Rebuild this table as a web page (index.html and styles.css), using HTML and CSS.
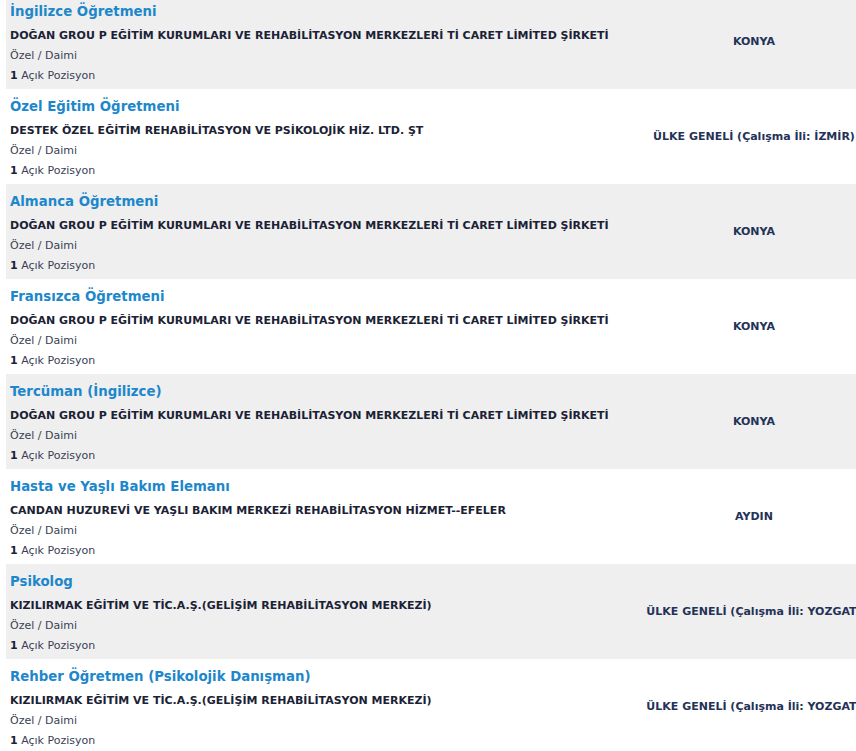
FILE: index.html
```html
<!DOCTYPE html>
<html lang="tr">
<head>
    <meta charset="UTF-8">
    <meta name="viewport" content="width=device-width, initial-scale=1.0">
    <title>İş İlanları</title>
    <link rel="stylesheet" href="styles.css">
</head>
<body>
    <div class="list">
        <div class="job alt">
            <div class="info">
                <a class="title" href="#">İngilizce Öğretmeni</a>
                <div class="company">DOĞAN GROU P EĞİTİM KURUMLARI VE REHABİLİTASYON MERKEZLERİ Tİ CARET LİMİTED ŞİRKETİ</div>
                <div class="meta">Özel / Daimi</div>
                <div class="meta"><b>1</b> Açık Pozisyon</div>
            </div>
            <div class="place"><span>KONYA</span></div>
        </div>

        <div class="job">
            <div class="info">
                <a class="title" href="#">Özel Eğitim Öğretmeni</a>
                <div class="company">DESTEK ÖZEL EĞİTİM REHABİLİTASYON VE PSİKOLOJİK HİZ. LTD. ŞT</div>
                <div class="meta">Özel / Daimi</div>
                <div class="meta"><b>1</b> Açık Pozisyon</div>
            </div>
            <div class="place"><span>ÜLKE GENELİ (Çalışma İli: İZMİR)</span></div>
        </div>

        <div class="job alt">
            <div class="info">
                <a class="title" href="#">Almanca Öğretmeni</a>
                <div class="company">DOĞAN GROU P EĞİTİM KURUMLARI VE REHABİLİTASYON MERKEZLERİ Tİ CARET LİMİTED ŞİRKETİ</div>
                <div class="meta">Özel / Daimi</div>
                <div class="meta"><b>1</b> Açık Pozisyon</div>
            </div>
            <div class="place"><span>KONYA</span></div>
        </div>

        <div class="job">
            <div class="info">
                <a class="title" href="#">Fransızca Öğretmeni</a>
                <div class="company">DOĞAN GROU P EĞİTİM KURUMLARI VE REHABİLİTASYON MERKEZLERİ Tİ CARET LİMİTED ŞİRKETİ</div>
                <div class="meta">Özel / Daimi</div>
                <div class="meta"><b>1</b> Açık Pozisyon</div>
            </div>
            <div class="place"><span>KONYA</span></div>
        </div>

        <div class="job alt">
            <div class="info">
                <a class="title" href="#">Tercüman (İngilizce)</a>
                <div class="company">DOĞAN GROU P EĞİTİM KURUMLARI VE REHABİLİTASYON MERKEZLERİ Tİ CARET LİMİTED ŞİRKETİ</div>
                <div class="meta">Özel / Daimi</div>
                <div class="meta"><b>1</b> Açık Pozisyon</div>
            </div>
            <div class="place"><span>KONYA</span></div>
        </div>

        <div class="job">
            <div class="info">
                <a class="title" href="#">Hasta ve Yaşlı Bakım Elemanı</a>
                <div class="company">CANDAN HUZUREVİ VE YAŞLI BAKIM MERKEZİ REHABİLİTASYON HİZMET--EFELER</div>
                <div class="meta">Özel / Daimi</div>
                <div class="meta"><b>1</b> Açık Pozisyon</div>
            </div>
            <div class="place"><span>AYDIN</span></div>
        </div>

        <div class="job alt">
            <div class="info">
                <a class="title" href="#">Psikolog</a>
                <div class="company">KIZILIRMAK EĞİTİM VE TİC.A.Ş.(GELİŞİM REHABİLİTASYON MERKEZİ)</div>
                <div class="meta">Özel / Daimi</div>
                <div class="meta"><b>1</b> Açık Pozisyon</div>
            </div>
            <div class="place"><span>ÜLKE GENELİ (Çalışma İli: YOZGAT)</span></div>
        </div>

        <div class="job">
            <div class="info">
                <a class="title" href="#">Rehber Öğretmen (Psikolojik Danışman)</a>
                <div class="company">KIZILIRMAK EĞİTİM VE TİC.A.Ş.(GELİŞİM REHABİLİTASYON MERKEZİ)</div>
                <div class="meta">Özel / Daimi</div>
                <div class="meta"><b>1</b> Açık Pozisyon</div>
            </div>
            <div class="place"><span>ÜLKE GENELİ (Çalışma İli: YOZGAT)</span></div>
        </div>
    </div>
</body>
</html>
```

FILE: styles.css
```css
html, body {
    margin: 0;
    padding: 0;
    background: #fff;
    overflow: hidden;
}

body {
    font-family: 'DejaVu Sans', Verdana, sans-serif;
    color: #1d2740;
}

.list {
    margin-top: -6px;
    margin-left: 6px;
}

.job {
    display: grid;
    grid-template-columns: 1fr 204px;
    height: 95px;
    box-sizing: border-box;
}

.job.alt {
    background: #efefef;
}

.info {
    padding: 8px 0 0 4px;
    min-width: 0;
}

.title {
    display: block;
    font-size: 13.3px;
    font-weight: bold;
    line-height: 20px;
    color: #1d87cb;
    text-decoration: none;
}

.company {
    margin-top: 4px;
    font-size: 11px;
    font-weight: bold;
    line-height: 20px;
    white-space: nowrap;
    color: #1b2235;
}

.meta {
    font-size: 11px;
    line-height: 20px;
    color: #3a3f55;
}

.meta b {
    color: #1b2235;
}

.place {
    display: flex;
    align-items: center;
    justify-content: center;
    font-size: 11px;
    font-weight: bold;
    white-space: nowrap;
    color: #243258;
}
```
